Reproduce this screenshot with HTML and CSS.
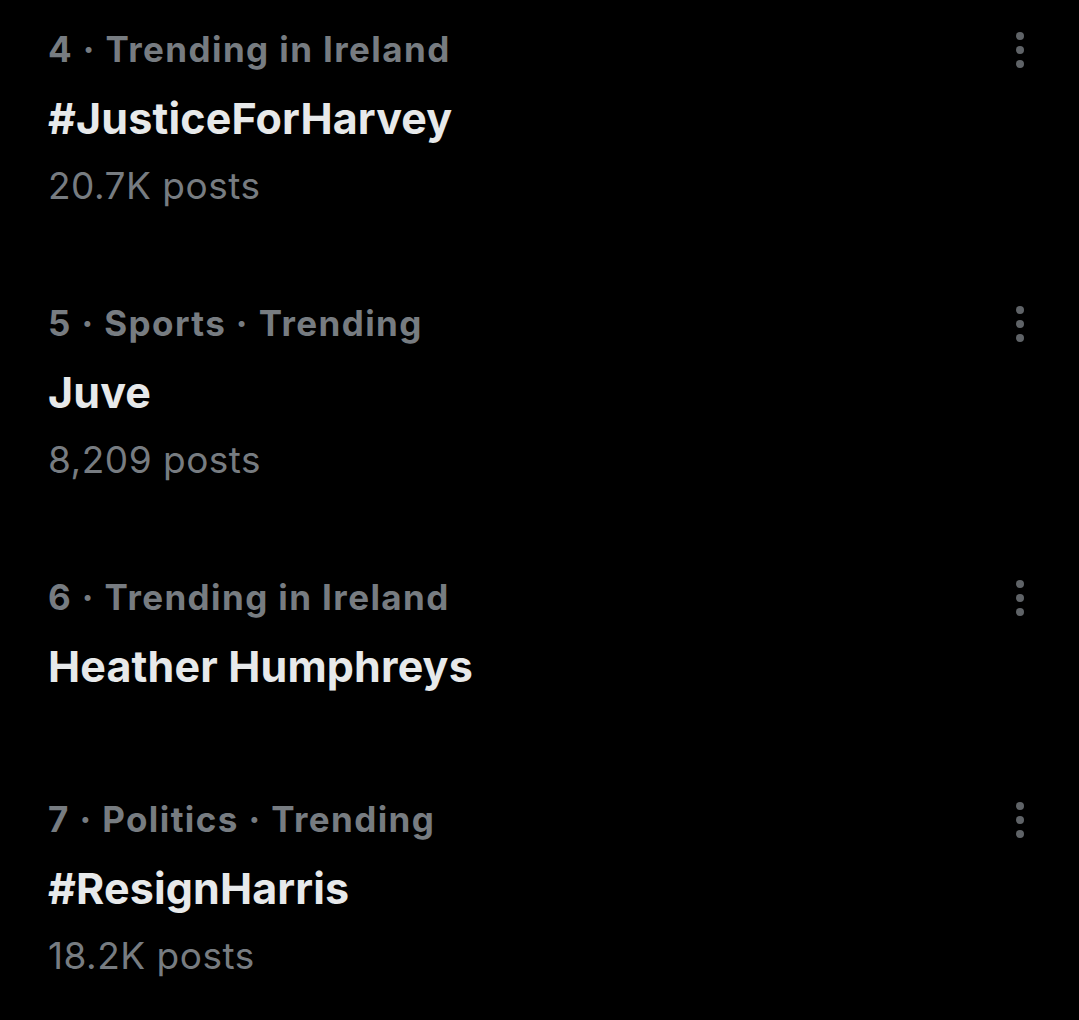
FILE: index.html
```html
<!DOCTYPE html>
<html lang="en">
<head>
<meta charset="utf-8">
<title>Trending</title>
<link rel="stylesheet" href="styles.css">
</head>
<body>
<main class="trends">
  <section class="trend">
    <div class="trend__body">
      <div class="trend__meta">4 · Trending in Ireland</div>
      <div class="trend__title">#JusticeForHarvey</div>
      <div class="trend__count">20.7K posts</div>
    </div>
    <button class="trend__more" aria-label="More">
      <svg viewBox="0 0 8 36" width="8" height="36"><circle cx="4" cy="4" r="4"/><circle cx="4" cy="18" r="4"/><circle cx="4" cy="32" r="4"/></svg>
    </button>
  </section>
  <section class="trend">
    <div class="trend__body">
      <div class="trend__meta">5 · Sports · Trending</div>
      <div class="trend__title">Juve</div>
      <div class="trend__count">8,209 posts</div>
    </div>
    <button class="trend__more" aria-label="More">
      <svg viewBox="0 0 8 36" width="8" height="36"><circle cx="4" cy="4" r="4"/><circle cx="4" cy="18" r="4"/><circle cx="4" cy="32" r="4"/></svg>
    </button>
  </section>
  <section class="trend trend--short">
    <div class="trend__body">
      <div class="trend__meta">6 · Trending in Ireland</div>
      <div class="trend__title">Heather Humphreys</div>
    </div>
    <button class="trend__more" aria-label="More">
      <svg viewBox="0 0 8 36" width="8" height="36"><circle cx="4" cy="4" r="4"/><circle cx="4" cy="18" r="4"/><circle cx="4" cy="32" r="4"/></svg>
    </button>
  </section>
  <section class="trend">
    <div class="trend__body">
      <div class="trend__meta">7 · Politics · Trending</div>
      <div class="trend__title">#ResignHarris</div>
      <div class="trend__count">18.2K posts</div>
    </div>
    <button class="trend__more" aria-label="More">
      <svg viewBox="0 0 8 36" width="8" height="36"><circle cx="4" cy="4" r="4"/><circle cx="4" cy="18" r="4"/><circle cx="4" cy="32" r="4"/></svg>
    </button>
  </section>
</main>
</body>
</html>
```
FILE: styles.css
```css
html, body {
  margin: 0;
  background: #000;
}
body {
  font-family: Inter, "Noto Sans", sans-serif;
  overflow: hidden;
}
.trends {
  padding-top: 27px;
}
.trend {
  display: flex;
  align-items: flex-start;
  padding: 0 42px 91px 48px;
}
.trend--short {
  padding-bottom: 103px;
}
.trend__body {
  flex: 1;
}
.trend__meta {
  font-weight: 700;
  font-size: 35px;
  line-height: 44px;
  letter-spacing: 1.4px;
  color: #777c81;
  white-space: nowrap;
}
.trend__title {
  margin-top: 19px;
  font-weight: 700;
  font-size: 43px;
  line-height: 56px;
  letter-spacing: 0.15px;
  color: #e7e9ea;
  white-space: nowrap;
}
.trend__count {
  margin-top: 16px;
  font-weight: 400;
  font-size: 37px;
  line-height: 48px;
  letter-spacing: 0.5px;
  color: #777c81;
  white-space: nowrap;
}
.trend__more {
  margin-top: 5px;
  padding: 0;
  border: 0;
  background: none;
  width: 34px;
  display: flex;
  justify-content: center;
}
.trend__more svg {
  fill: #5f6367;
  display: block;
}
```
